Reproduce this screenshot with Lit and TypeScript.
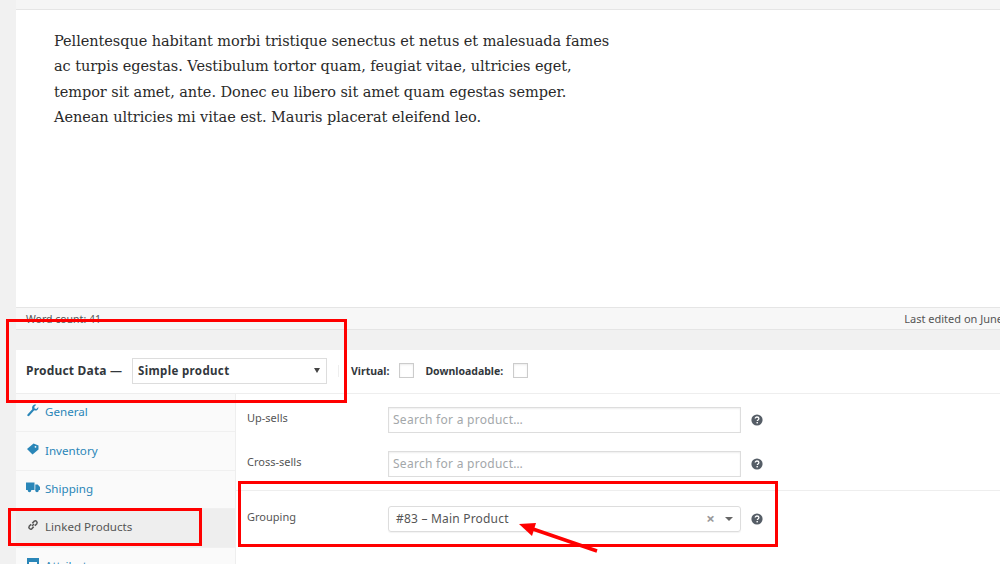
import { LitElement, html, css, svg } from "lit";
import { customElement } from "lit/decorators.js";

const help = html`<svg class="help" viewBox="0 0 12 12"><circle cx="6" cy="6" r="5.6" fill="#555d66"/><path d="M4.2 4.6c0-1 .8-1.6 1.8-1.6s1.9.6 1.9 1.6c0 1.4-1.6 1.3-1.6 2.5" fill="none" stroke="#fff" stroke-width="1.3"/><rect x="5.5" y="8" width="1.4" height="1.4" fill="#fff"/></svg>`;

const icons: Record<string, unknown> = {
  wrench: svg`<path d="M1.5 11.5 6.3 6.2C5.7 4.4 6.4 2.4 8 1.8c.8-.3 1.6-.3 2.2 0L8.3 3.7l.3 1.8 1.8.4 1.9-1.9c.2 1-.1 2-.8 2.7-.9.9-2.2 1.100-3.300.6L3.300 12.800c-.5.5-1.300.5-1.800 0-.4-.4-.4-.9 0-1.300z"/>`,
  tag: svg`<path d="M1 7 7.500 1.500 12.500 3.500 12.500 7.500 6.500 12.500z"/><circle cx="9.500" cy="4.800" r=".9" fill="#fafafa"/>`,
  truck: svg`<path d="M0 2.500h8.500v7.500H0zM9.300 4.500h2.400L14 7v3H9.300z"/><circle cx="3.500" cy="10.500" r="1.700"/><circle cx="11" cy="10.500" r="1.700"/>`,
  link: svg`<path d="M6 8 8 6M5.200 6.300 3.200 8.300a1.800 1.800 0 0 0 2.500 2.500l2-2M8.800 7.700l2-2a1.800 1.800 0 0 0-2.500-2.500l-2 2" fill="none" stroke="currentColor" stroke-width="1.500"/>`,
  table: svg`<path d="M1 1h12v12H1z"/><path d="M3 5h8v6H3z" fill="#fafafa"/>`,
};

@customElement("app-root")
export class AppRoot extends LitElement {
  static styles = css`
    :host { display: block; width: 1000px; height: 564px; overflow: hidden; position: relative; background: #f1f1f1; font-family: "Noto Sans", sans-serif; color: #555; }
    .page { margin-left: 16px; display: flex; flex-direction: column; width: 984px; }
    .top { height: 9px; background: #f5f5f5; border-bottom: 1px solid #e5e5e5; }
    .content { height: 297px; box-sizing: border-box; background: #fff; padding: 19px 38px 0; font-family: "DejaVu Serif", serif; font-size: 14.500px; line-height: 25.400px; color: #2a2a2a; letter-spacing: -.06px; white-space: nowrap; }
    .status { height: 23px; box-sizing: border-box; background: #f7f7f7; border-top: 1px solid #e5e5e5; border-bottom: 1px solid #e5e5e5; display: flex; justify-content: space-between; padding: 2px 0 0 10px; font-size: 10.500px; line-height: 18px; color: #555; white-space: nowrap; }
    .status span:last-child { font-size: 11px; margin-right: -3px; }
    .gap { height: 20px; }
    .panel { background: #fff; height: 240px; display: flex; flex-direction: column; }
    .head { height: 44px; flex: none; display: flex; align-items: center; border-bottom: 1px solid #eee; padding: 0 0 2px 10px; box-sizing: border-box; font-size: 10.500px; font-weight: 700; color: #32373c; white-space: nowrap; }
    .title { width: 106px; font-size: 12px; letter-spacing: .2px; }
    .select { width: 195px; height: 26px; box-sizing: border-box; border: 1px solid #ddd; display: flex; align-items: center; justify-content: space-between; padding: 0 6px 0 5px; color: #32373c; font-size: 11.500px; letter-spacing: .35px; }
    .caret { width: 0; height: 0; border: 3px solid transparent; border-top: 5px solid #444; border-bottom: 0; }
    .sep { width: 1px; height: 12px; background: #eee; margin: 0 12px 0 11px; }
    .check { width: 15px; height: 15px; box-sizing: border-box; border: 1px solid #ccc; margin: 0 11px 0 10px; background: #fff; box-shadow: inset 0 1px 2px rgba(0,0,0,.08); }
    .body { flex: 1; display: flex; min-height: 0; }
    .tabs { width: 219px; flex: none; background: #fafafa; border-right: 1px solid #eee; display: flex; flex-direction: column; }
    .tab { height: 38.400px; flex: none; box-sizing: border-box; border-bottom: 1px solid #f0f0f0; display: flex; align-items: center; gap: 5px; padding: 0 0 2px 10px; font-size: 11.600px; color: #2a86b8; }
    .tab svg { width: 14px; height: 14px; fill: currentColor; flex: none; margin-top: -3px; }
    .tab.on { background: #eee; color: #555; }
    .rows { flex: 1; }
    .row { display: flex; align-items: center; padding-left: 11px; font-size: 11px; color: #555; box-sizing: border-box; }
    .row.a { height: 44px; padding-top: 8px; }
    .row.b { height: 53px; border-bottom: 1px solid #eee; }
    .row.c { height: 55px; }
    .row label { width: 141px; flex: none; margin-top: -6px; }
    .row.c label { margin-top: -4px; }
    .input { width: 353px; height: 26px; box-sizing: border-box; border: 1px solid #ddd; box-shadow: inset 0 1px 2px rgba(0,0,0,.07); padding: 0 4px 2px; display: flex; align-items: center; font-size: 12px; color: #a3a7aa; letter-spacing: .28px; }
    .input.sel { border-radius: 3px; border-color: #ddd; box-shadow: 0 1px 1px rgba(0,0,0,.05); padding: 0 7px 0 7px; color: #555; justify-content: space-between; letter-spacing: .2px; }
    .ctrl { display: flex; align-items: center; gap: 10px; }
    .ctrl .caret { border-width: 4px; border-top: 4px solid #666; border-bottom: 0; }
    .x { font-size: 15px; font-weight: 700; color: #999; line-height: 1; }
    .help { width: 12px; height: 12px; margin-left: 10px; flex: none; }
    .box { position: absolute; box-sizing: border-box; border: 3.500px solid #f00; pointer-events: none; }
    .arrow { position: absolute; left: 515px; top: 520px; width: 90px; height: 36px; pointer-events: none; }
  `;

  render() {
    const tab = (icon: string, name: string, on = false) => html`<div class="tab ${on ? "on" : ""}"><svg viewBox="0 0 14 14">${icons[icon]}</svg>${name}</div>`;
    return html`
      <div class="page">
        <div class="top"></div>
        <div class="content">
          Pellentesque habitant morbi tristique senectus et netus et malesuada fames<br />
          ac turpis egestas. Vestibulum tortor quam, feugiat vitae, ultricies eget,<br />
          tempor sit amet, ante. Donec eu libero sit amet quam egestas semper.<br />
          Aenean ultricies mi vitae est. Mauris placerat eleifend leo.
        </div>
        <div class="status"><span>Word count: 41</span><span>Last edited on June</span></div>
        <div class="gap"></div>
        <div class="panel">
          <div class="head">
            <span class="title">Product Data —</span>
            <div class="select"><span>Simple product</span><i class="caret"></i></div>
            <i class="sep"></i>
            <span>Virtual:</span><i class="check"></i>
            <span>Downloadable:</span><i class="check"></i>
          </div>
          <div class="body">
            <div class="tabs">
              ${tab("wrench", "General")}
              ${tab("tag", "Inventory")}
              ${tab("truck", "Shipping")}
              ${tab("link", "Linked Products", true)}
              ${tab("table", "Attributes")}
            </div>
            <div class="rows">
              <div class="row a"><label>Up-sells</label><div class="input">Search for a product…</div>${help}</div>
              <div class="row b"><label>Cross-sells</label><div class="input">Search for a product…</div>${help}</div>
              <div class="row c"><label>Grouping</label>
                <div class="input sel"><span>#83 – Main Product</span><span class="ctrl"><span class="x">×</span><i class="caret"></i></span></div>${help}
              </div>
            </div>
          </div>
        </div>
      </div>
      <div class="box" style="left:6px;top:319px;width:341px;height:84px"></div>
      <div class="box" style="left:8px;top:508px;width:194px;height:38px"></div>
      <div class="box" style="left:238px;top:481px;width:540px;height:66px"></div>
      <svg class="arrow" viewBox="0 0 90 36">
        <path d="M82 31 15 8" stroke="#f00" stroke-width="3.500" fill="none"/>
        <path d="M4 4 21 3 17 16z" fill="#f00"/>
      </svg>
    `;
  }
}
